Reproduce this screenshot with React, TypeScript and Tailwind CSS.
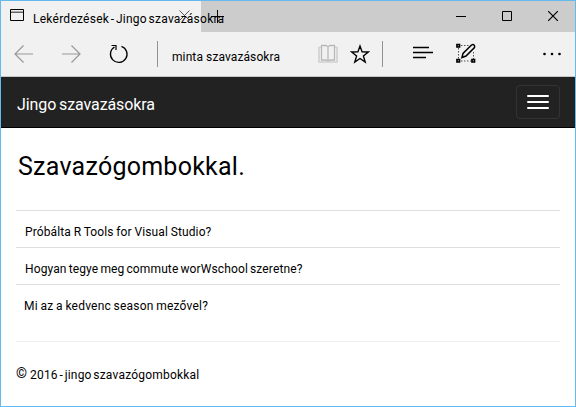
import type { ReactNode } from "react";

const polls = [
  { text: "Próbálta R Tools for Visual Studio?", style: "pl-[9px] tracking-[0.12px] [word-spacing:-0.4px]" },
  { text: "Hogyan tegye meg commute worWschool szeretne?", style: "pl-[9px] tracking-[0.12px] [word-spacing:-1px]" },
  { text: "Mi az a kedvenc season mezővel?", style: "pl-2 tracking-[0.2px] [word-spacing:-0.5px]" },
];

function Icon({ w, h, className = "", children }: { w: number; h: number; className?: string; children: ReactNode }) {
  return (
    <svg width={w} height={h} viewBox={`0 0 ${w} ${h}`} fill="none" stroke="currentColor" className={`shrink-0 ${className}`}>
      {children}
    </svg>
  );
}

function TitleBar() {
  return (
    <div className="flex h-[31px] bg-[#cccccc]">
      <div className="relative flex w-[200px] shrink-0 bg-[#f1f1f1]">
        <Icon w={14} h={12} className="mt-[8px] ml-[9px]">
          <path d="M1 2.500h12" stroke="#aaa" />
          <path d="M1 3.500h12" stroke="#666" />
          <path d="M.5 .5h13v11H.5z" />
        </Icon>
        <Icon w={11} h={11} className="mt-[9px] ml-[155px] text-[#555]">
          <path d="M.5 .5l10 10M10.500 .5l-10 10" />
        </Icon>
        <span className="absolute top-[10px] left-8 z-10 text-xs leading-4 tracking-[0.25px] whitespace-nowrap [word-spacing:-1.600px]">Lekérdezések - Jingo szavazásokra</span>
      </div>
      <Icon w={13} h={13} className="mt-[9px] ml-[10px]">
        <path d="M6.500 0v13M0 6.500h13" />
      </Icon>
      <div className="mr-[17px] ml-auto flex gap-[36px] pt-[10px]">
        <Icon w={10} h={10}><path d="M0 5.500h10" /></Icon>
        <Icon w={10} h={10}><path d="M.5 .5h9v9h-9z" /></Icon>
        <Icon w={10} h={10}><path d="M0 0l10 10M10 0L0 10" strokeWidth="1.200" /></Icon>
      </div>
    </div>
  );
}

function Toolbar() {
  return (
    <div className="flex h-[45px] border-b border-[#c6c6c6] bg-[#f1f1f1]">
      <Icon w={19} h={18} className="mt-[13px] ml-[13px] text-[#999]">
        <path d="M19 9H1M9.500 .5L1 9l8.500 8.500" strokeWidth="1.200" />
      </Icon>
      <Icon w={19} h={18} className="mt-[13px] ml-[29px] text-[#999]">
        <path d="M0 9h18M9.500 .5L18 9l-8.500 8.500" strokeWidth="1.200" />
      </Icon>
      <Icon w={20} h={20} className="mt-[12px] ml-[28px]">
        <path d="M5.500 3A8.300 8.300 0 1 0 12.500 2.300" strokeWidth="1.300" />
        <path d="M2.500 1.500h4.500v4.500" strokeWidth="1.200" />
      </Icon>
      <div className="mt-[9px] ml-[28px] h-[26px] w-px bg-[#929292]" />
      <span className="mt-[17px] ml-[14px] w-[146px] shrink-0 text-xs leading-4 tracking-[0.1px] whitespace-nowrap">minta szavazásokra</span>
      <Icon w={20} h={19} className="mt-[12px] text-[#b8b8b8]">
        <path d="M3.500 16V1.500h4.500l2 1 2-1h4.500V16H12l-2 1-2-1zM10 2.500V17" strokeWidth="1.300" />
        <path d="M3 3.500H1v14.500h18V3.500h-2" stroke="#d0d0d0" strokeWidth="1.600" />
      </Icon>
      <Icon w={20} h={20} className="mt-[12px] ml-[12px]">
        <path d="M10 2l2.100 5.900 6.200.100-4.900 3.900 1.800 6.100L10 14.500 4.800 18l1.800-6.100L1.700 8l6.200-.100z" strokeWidth="1.400" />
      </Icon>
      <div className="mt-[9px] ml-[12px] h-[26px] w-px bg-[#929292]" />
      <Icon w={20} h={13} className="mt-[14px] ml-[30px]">
        <path d="M0 1.500h16M0 6.500h20M0 11.500h13" strokeWidth="1.300" />
      </Icon>
      <Icon w={20} h={20} className="mt-[11px] ml-[23px]">
        <path d="M5 2.500h8M2.500 5v11M5 18h11M17.500 9v8" stroke="#555" strokeDasharray="1.500 1.500" />
        <path d="M1 1.500h2.500V4H1zM1 16.500h2.500V19H1zM16 16.500h2.500V19H16z" strokeWidth="1.700" />
        <path d="M6 14.500l1-4L15.500 2q1.500-1 2.500 0t.5 2.500L10 13z" strokeWidth="1.500" />
      </Icon>
      <Icon w={20} h={4} className="mt-[20px] ml-[66px]">
        <g fill="currentColor" stroke="none"><circle cx="2.500" cy="2" r="1.300" /><circle cx="10" cy="2" r="1.300" /><circle cx="17.500" cy="2" r="1.300" /></g>
      </Icon>
    </div>
  );
}

export default function App() {
  return (
    <div className="h-[407px] w-[576px] overflow-hidden border border-[#65b9ec] bg-white font-[Roboto,sans-serif] text-black">
      <TitleBar />
      <Toolbar />
      <nav className="flex h-[51px] items-start justify-between border-b border-black bg-[#222] pr-[15px] pl-4">
        <span className="mt-[16px] text-base leading-6 tracking-[-0.1px] whitespace-nowrap text-white [word-spacing:-1px]">Jingo szavazásokra</span>
        <button aria-label="Menu" className="mt-2 flex h-[34px] w-11 flex-col items-center justify-center gap-1 rounded border border-[#333]">
          <span className="h-0.5 w-[22px] rounded-[1px] bg-white" />
          <span className="h-0.5 w-[22px] rounded-[1px] bg-white" />
          <span className="h-0.5 w-[22px] rounded-[1px] bg-white" />
        </button>
      </nav>
      <main className="pr-[15px] pl-[15px]">
        <h1 className="flex h-[82px] items-start pt-[23px] pl-[2px] text-[25px] leading-8 tracking-[0.25px] whitespace-nowrap">Szavazógombokkal.</h1>
        {polls.map((p) => (
          <div key={p.text} className={`h-[37px] border-t border-[#ddd] pt-[13px] text-xs leading-4 whitespace-nowrap ${p.style}`}>{p.text}</div>
        ))}
        <footer className="mt-5 flex border-t border-[#eee] pt-[25px] text-xs leading-4 whitespace-nowrap">
          <span className="-mt-[2px] w-[14px] text-[14px]">©</span>
          <span className="tracking-[0.2px] [word-spacing:-1.500px]">2016 - jingo szavazógombokkal</span>
        </footer>
      </main>
    </div>
  );
}
